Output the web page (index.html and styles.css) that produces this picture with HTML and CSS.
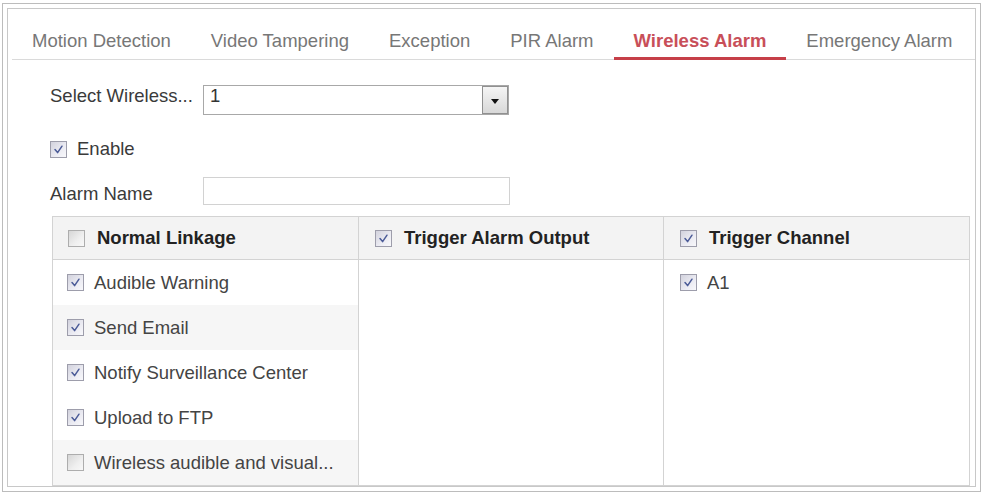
FILE: index.html
```html
<!DOCTYPE html>
<html>
<head>
<meta charset="utf-8">
<link rel="stylesheet" href="styles.css">
</head>
<body>
<div class="outer">
  <div class="inner">
    <ul class="tabs">
      <li class="tab">Motion Detection</li>
      <li class="tab">Video Tampering</li>
      <li class="tab">Exception</li>
      <li class="tab">PIR Alarm</li>
      <li class="tab active">Wireless Alarm</li>
      <li class="tab">Emergency Alarm</li>
    </ul>
    <div class="form">
      <div class="row row-select">
        <span class="label">Select Wireless...</span>
        <div class="select"><span class="value">1</span><span class="arrow"><span class="tri"></span></span></div>
      </div>
      <div class="row row-enable">
        <span class="cb"><svg viewBox="0 0 11 11" width="11" height="11"><path d="M2 5.5 L4.6 8.6 L9 2.2" /></svg></span>
        <span class="text">Enable</span>
      </div>
      <div class="row row-name">
        <span class="label">Alarm Name</span>
        <div class="input"></div>
      </div>
    </div>
    <div class="linkage">
      <div class="th"><span class="cb off"></span>Normal Linkage</div>
      <div class="th sep"><span class="cb"><svg viewBox="0 0 11 11" width="11" height="11"><path d="M2 5.5 L4.6 8.6 L9 2.2" /></svg></span>Trigger Alarm Output</div>
      <div class="th sep"><span class="cb"><svg viewBox="0 0 11 11" width="11" height="11"><path d="M2 5.5 L4.6 8.6 L9 2.2" /></svg></span>Trigger Channel</div>
      <div class="cell first">
        <div class="item"><span class="cb"><svg viewBox="0 0 11 11" width="11" height="11"><path d="M2 5.5 L4.6 8.6 L9 2.2" /></svg></span>Audible Warning</div>
        <div class="item alt"><span class="cb"><svg viewBox="0 0 11 11" width="11" height="11"><path d="M2 5.5 L4.6 8.6 L9 2.2" /></svg></span>Send Email</div>
        <div class="item"><span class="cb"><svg viewBox="0 0 11 11" width="11" height="11"><path d="M2 5.5 L4.6 8.6 L9 2.2" /></svg></span>Notify Surveillance Center</div>
        <div class="item"><span class="cb"><svg viewBox="0 0 11 11" width="11" height="11"><path d="M2 5.5 L4.6 8.6 L9 2.2" /></svg></span>Upload to FTP</div>
        <div class="item alt"><span class="cb off"></span>Wireless audible and visual...</div>
      </div>
      <div class="cell sep"></div>
      <div class="cell sep">
        <div class="item"><span class="cb"><svg viewBox="0 0 11 11" width="11" height="11"><path d="M2 5.5 L4.6 8.6 L9 2.2" /></svg></span>A1</div>
      </div>
    </div>
  </div>
</div>
</body>
</html>
```
FILE: styles.css
```css
html, body {
  margin: 0;
  padding: 0;
  background: #fff;
}
body {
  font-family: "Liberation Sans", Arial, sans-serif;
  font-size: 18.5px;
  color: #444;
}
.outer {
  margin: 3px 0 0 2px;
  width: 979px;
  height: 489px;
  box-sizing: border-box;
  border: 1px solid #bcbcbc;
  padding: 4px;
}
.inner {
  box-sizing: border-box;
  height: 100%;
  border: 1px solid #c8c8c8;
  overflow: hidden;
}
.tabs {
  list-style: none;
  margin: 0 0 0 4px;
  padding: 0;
  display: flex;
  border-bottom: 1px solid #dadada;
}
.tab {
  padding: 21px 20px 5px;
  line-height: 22px;
  color: #777;
  white-space: nowrap;
  border-bottom: 3px solid transparent;
  margin-bottom: -1px;
}
.tab.active {
  color: #c84f59;
  font-weight: bold;
  border-bottom-color: #c63f48;
}
.form {
  margin-left: 42px;
}
.row {
  display: flex;
  align-items: flex-start;
}
.label {
  width: 153px;
  line-height: 22px;
  color: #3a3a3a;
}
.row-select {
  margin-top: 25px;
}
.select {
  width: 306px;
  height: 30px;
  box-sizing: border-box;
  border: 1px solid #a8a8a8;
  display: flex;
  justify-content: space-between;
}
.select .value {
  padding-left: 6px;
  line-height: 20px;
  color: #333;
}
.arrow {
  width: 26px;
  height: 28px;
  box-sizing: border-box;
  border: 1px solid #909090;
  background: linear-gradient(#f5f5f5, #d8d8d8);
  display: flex;
  align-items: center;
  justify-content: center;
}
.tri {
  width: 0;
  height: 0;
  border-left: 4px solid transparent;
  border-right: 4px solid transparent;
  border-top: 5px solid #111;
  margin-top: 2px;
}
.row-enable {
  margin-top: 23px;
  align-items: center;
  line-height: 22px;
  color: #3a3a3a;
}
.row-name {
  margin-top: 17px;
}
.row-name .label {
  margin-top: 6px;
}
.input {
  width: 307px;
  height: 28px;
  box-sizing: border-box;
  border: 1px solid #d2d2d2;
}
.linkage {
  margin: 11px 0 0 44px;
  width: 918px;
  box-sizing: border-box;
  border: 1px solid #d3d3d3;
  display: grid;
  grid-template-columns: 305px 305px 1fr;
}
.th {
  height: 43px;
  box-sizing: border-box;
  background: #f3f3f3;
  border-bottom: 1px solid #d3d3d3;
  display: flex;
  align-items: center;
  padding-left: 15px;
  font-weight: bold;
  color: #222;
}
.th .cb {
  margin-right: 12px;
}
.sep {
  border-left: 1px solid #d3d3d3;
  padding-left: 16px;
}
.cell.sep {
  padding-left: 0;
}
.cell.sep .item {
  padding-left: 16px;
}
.item {
  height: 45px;
  display: flex;
  align-items: center;
  padding-left: 14px;
  color: #444;
  white-space: nowrap;
}
.item.alt {
  background: #f6f6f6;
}
.cb {
  width: 17px;
  height: 17px;
  box-sizing: border-box;
  border: 1px solid #9d9dab;
  background: linear-gradient(135deg, #d2d2dd 0%, #ececf3 60%, #f8f8fb 100%);
  flex: none;
  display: inline-flex;
  align-items: center;
  justify-content: center;
  margin-right: 10px;
}
.cb.off {
  border-color: #adadad;
  background: linear-gradient(135deg, #d6d6d6 0%, #efefef 60%, #f8f8f8 100%);
}
.cb svg path {
  fill: none;
  stroke: #4c5c98;
  stroke-width: 1.5;
  stroke-linecap: round;
  stroke-linejoin: round;
}
```
